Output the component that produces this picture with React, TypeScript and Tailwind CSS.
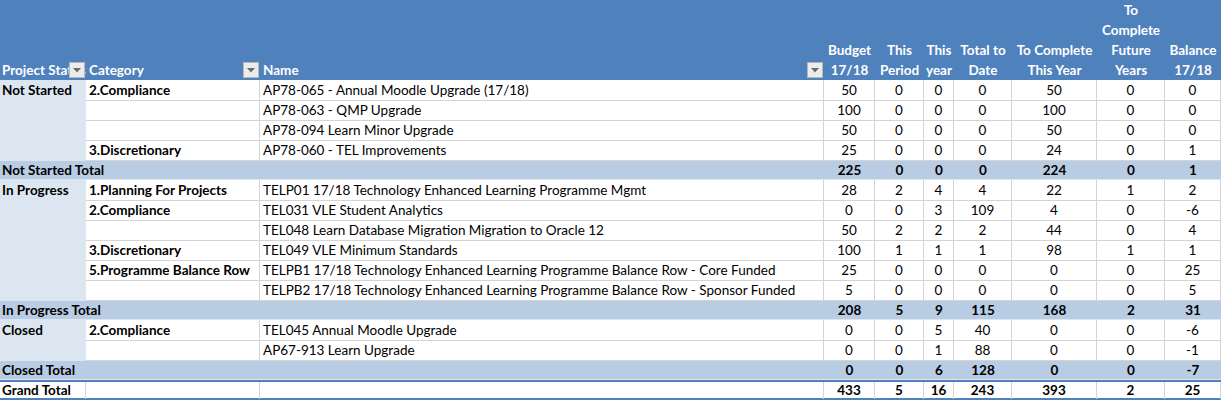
import React from 'react';

type Row =
  | { kind: 'data'; status?: string; cat?: string; name: string; v: number[] }
  | { kind: 'total'; label: string; v: number[] }
  | { kind: 'grand'; label: string; v: number[] };

const rows: Row[] = [
  { kind: 'data', status: 'Not Started', cat: '2.Compliance', name: 'AP78-065 - Annual Moodle Upgrade (17/18)', v: [50, 0, 0, 0, 50, 0, 0] },
  { kind: 'data', name: 'AP78-063 - QMP Upgrade', v: [100, 0, 0, 0, 100, 0, 0] },
  { kind: 'data', name: 'AP78-094 Learn Minor Upgrade', v: [50, 0, 0, 0, 50, 0, 0] },
  { kind: 'data', cat: '3.Discretionary', name: 'AP78-060 - TEL Improvements', v: [25, 0, 0, 0, 24, 0, 1] },
  { kind: 'total', label: 'Not Started Total', v: [225, 0, 0, 0, 224, 0, 1] },
  { kind: 'data', status: 'In Progress', cat: '1.Planning For Projects', name: 'TELP01 17/18 Technology Enhanced Learning Programme Mgmt', v: [28, 2, 4, 4, 22, 1, 2] },
  { kind: 'data', cat: '2.Compliance', name: 'TEL031 VLE Student Analytics', v: [0, 0, 3, 109, 4, 0, -6] },
  { kind: 'data', name: 'TEL048 Learn Database Migration Migration to Oracle 12', v: [50, 2, 2, 2, 44, 0, 4] },
  { kind: 'data', cat: '3.Discretionary', name: 'TEL049 VLE Minimum Standards', v: [100, 1, 1, 1, 98, 1, 1] },
  { kind: 'data', cat: '5.Programme Balance Row', name: 'TELPB1 17/18 Technology Enhanced Learning Programme Balance Row - Core Funded', v: [25, 0, 0, 0, 0, 0, 25] },
  { kind: 'data', name: 'TELPB2 17/18 Technology Enhanced Learning Programme Balance Row - Sponsor Funded', v: [5, 0, 0, 0, 0, 0, 5] },
  { kind: 'total', label: 'In Progress Total', v: [208, 5, 9, 115, 168, 2, 31] },
  { kind: 'data', status: 'Closed', cat: '2.Compliance', name: 'TEL045 Annual Moodle Upgrade', v: [0, 0, 5, 40, 0, 0, -6] },
  { kind: 'data', name: 'AP67-913 Learn Upgrade', v: [0, 0, 1, 88, 0, 0, -1] },
  { kind: 'total', label: 'Closed Total', v: [0, 0, 6, 128, 0, 0, -7] },
  { kind: 'grand', label: 'Grand Total', v: [433, 5, 16, 243, 393, 2, 25] },
];

const valueHeaders: string[][] = [
  ['Budget', '17/18'],
  ['This', 'Period'],
  ['This', 'year'],
  ['Total to', 'Date'],
  ['To Complete', 'This Year'],
  ['To', 'Complete', 'Future', 'Years'],
  ['Balance', '17/18'],
];

const grid = 'grid grid-cols-[86px_174px_564px_51px_49px_30px_58px_85px_68px_56px]';

function FilterButton() {
  return (
    <span className="absolute right-[1px] bottom-[2px] w-[16px] h-[16px] bg-[#ececec] border border-[#b7b7b7] flex items-center justify-center">
      <svg width="8" height="5" viewBox="0 0 8 5">
        <path d="M0 0 L8 0 L4 4.5 Z" fill="#6b6b6b" />
      </svg>
    </span>
  );
}

export default function App() {
  return (
    <div className="w-[1221px] h-[401px] bg-white text-[13.5px] text-black overflow-hidden" style={{ fontFamily: 'Lato, "Open Sans", sans-serif' }}>
      {/* Header */}
      <div className={`${grid} h-[80px] bg-[#4f81bd] text-white font-bold leading-[20px]`}>
        <div className="relative flex items-end pl-[2px] overflow-hidden whitespace-nowrap">
          <span>Project Status</span>
          <FilterButton />
        </div>
        <div className="relative flex items-end pl-[3px]">
          <span>Category</span>
          <FilterButton />
        </div>
        <div className="relative flex items-end pl-[3px]">
          <span>Name</span>
          <FilterButton />
        </div>
        {valueHeaders.map((lines, i) => (
          <div key={i} className="flex flex-col justify-end items-center text-center whitespace-nowrap">
            {lines.map((l) => (
              <span key={l}>{l}</span>
            ))}
          </div>
        ))}
      </div>

      {/* Body */}
      {rows.map((r, idx) => {
        if (r.kind === 'total') {
          return (
            <div key={idx} className={`${grid} h-[20px] leading-[20px] bg-[#b8cce4] font-bold border-b border-[#dce6f1]`}>
              <div className="col-span-3 pl-[2px] whitespace-nowrap">{r.label}</div>
              {r.v.map((n, i) => (
                <div key={i} className="text-center">{n}</div>
              ))}
            </div>
          );
        }
        if (r.kind === 'grand') {
          return (
            <div key={idx} className={`${grid} h-[20px] leading-[17px] font-bold border-t-[2px] border-b-[2px] border-[#4f81bd]`}>
              <div className="pl-[2px] whitespace-nowrap border-r border-[#d4d4d4]">{r.label}</div>
              <div className="border-r border-[#d4d4d4]"></div>
              <div className="border-r border-[#d4d4d4]"></div>
              {r.v.map((n, i) => (
                <div key={i} className="text-center border-r border-[#d4d4d4]">{n}</div>
              ))}
            </div>
          );
        }
        return (
          <div key={idx} className={`${grid} h-[20px] leading-[20px]`}>
            <div className="bg-[#dce6f1] font-bold pl-[2px] whitespace-nowrap">{r.status ?? ''}</div>
            <div className="font-bold pl-[3px] whitespace-nowrap border-r border-b border-[#d4d4d4]">{r.cat ?? ''}</div>
            <div className="pl-[3px] whitespace-nowrap overflow-hidden border-r border-b border-[#d4d4d4]">{r.name}</div>
            {r.v.map((n, i) => (
              <div key={i} className="text-center border-r border-b border-[#d4d4d4]">{n}</div>
            ))}
          </div>
        );
      })}
    </div>
  );
}
